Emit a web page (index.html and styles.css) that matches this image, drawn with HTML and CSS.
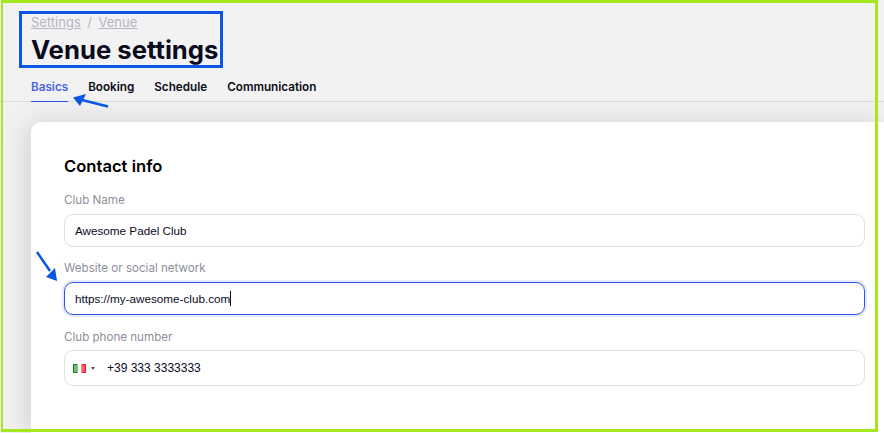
FILE: index.html
```html
<!DOCTYPE html>
<html lang="en">
<head>
    <meta charset="UTF-8">
    <meta name="viewport" content="width=device-width, initial-scale=1.0">
    <title>Venue settings</title>
    <link rel="stylesheet" href="styles.css">
</head>
<body>
    <div class="page">
        <header class="header">
            <nav class="breadcrumb">
                <a href="#">Settings</a>
                <span class="sep">/</span>
                <a href="#">Venue</a>
            </nav>
            <h1>Venue settings</h1>
        </header>

        <div class="tabs">
            <a href="#" class="tab active">Basics</a>
            <a href="#" class="tab">Booking</a>
            <a href="#" class="tab">Schedule</a>
            <a href="#" class="tab">Communication</a>
        </div>

        <main class="card">
            <h2>Contact info</h2>

            <label class="label">Club Name</label>
            <div class="field">Awesome Padel Club</div>

            <label class="label">Website or social network</label>
            <div class="field focused">https://my-awesome-club.com<span class="caret"></span></div>

            <label class="label phone-label">Club phone number</label>
            <div class="field phone">
                <svg class="flag" width="13" height="9" viewBox="0 0 13 9">
                    <rect width="13" height="9" fill="#fff"/>
                    <rect width="4.5" height="9" fill="#1f7a2c"/>
                    <rect x="1" y="1" width="3.5" height="7" fill="#6cc06f"/>
                    <rect x="8.5" width="4.5" height="9" fill="#f0222c"/>
                    <rect x="8.5" y="1" width="3" height="7" fill="#f76a6a"/>
                </svg>
                <span class="arrow"></span>
                <span class="phone-number">+39 333 3333333</span>
            </div>
        </main>
    </div>

    <!-- annotations drawn on top of the screenshot -->
    <div class="frame"></div>
    <div class="highlight"></div>
    <svg class="marks" width="884" height="433" viewBox="0 0 884 433">
        <line x1="108" y1="106.5" x2="82" y2="100" stroke="#0b57e3" stroke-width="2.5"/>
        <polygon points="73,97.5 86,94 80,106" fill="#0b57e3"/>
        <line x1="37" y1="252" x2="50" y2="271" stroke="#0b57e3" stroke-width="2.5"/>
        <polygon points="57,281 46,277 55,268" fill="#0b57e3"/>
    </svg>
</body>
</html>
```

FILE: styles.css
```css
body {
    margin: 0;
    height: 433px;
    overflow: hidden;
    background: #f2f2f3;
    font-family: 'Inter', sans-serif;
    color: #0b0b1e;
}
a {
    color: inherit;
}
.page {
    display: flex;
    flex-direction: column;
    height: 433px;
}
.header {
    padding: 14px 0 0 31px;
}
.breadcrumb {
    display: flex;
    gap: 6.5px;
    font-size: 13px;
    line-height: 16px;
    color: #b6b6c2;
}
.sep {
    text-decoration: none;
}
h1 {
    margin: 4px 0 0;
    font-size: 25.7px;
    line-height: 32px;
    font-weight: 700;
}
.tabs {
    display: flex;
    gap: 20px;
    margin-top: 10px;
    padding-left: 31px;
    border-bottom: 1px solid #dcdcde;
}
.tab {
    padding: 4px 0 6px;
    font-size: 11.7px;
    line-height: 15px;
    font-weight: 600;
    text-decoration: none;
    color: #0b0b14;
}
.tab.active {
    color: #4a64e8;
    border-bottom: 1px solid #2f4fe0;
    margin-bottom: -1px;
}
.card {
    flex: 1;
    margin: 20px 0 0 31px;
    padding: 34px 19px 0 33px;
    background: #fff;
    border-radius: 10px 0 0 0;
    box-shadow: -3px 2px 30px rgba(0, 0, 0, 0.15);
}
h2 {
    margin: 0 0 16px;
    font-size: 16.6px;
    line-height: 20px;
    font-weight: 600;
    color: #000;
}
.label {
    display: block;
    padding-top: 1px;
    margin-bottom: 6px;
    font-size: 11.6px;
    line-height: 15px;
    color: #8f8f9c;
}
.phone-label {
    padding-top: 2px;
    margin-bottom: 5px;
}
.field {
    display: flex;
    align-items: center;
    box-sizing: border-box;
    height: 33px;
    margin-bottom: 13px;
    padding: 0 10px;
    border: 1px solid #e0e0e4;
    border-radius: 9px;
    font-family: 'Liberation Sans', Arial, sans-serif;
    font-size: 11.7px;
    color: #0b0b1e;
}
.focused {
    border-color: #2f55e8;
    box-shadow: 0 0 0 2px #e4e9fc;
}
.caret {
    width: 1px;
    height: 15px;
    background: #0b0b1e;
}
.phone {
    height: 36px;
    padding-left: 8px;
}
.phone-number {
    font-size: 12px;
}
.flag {
    display: block;
}
.arrow {
    width: 0;
    height: 0;
    margin: 0 12px 0 5px;
    border-left: 2px solid transparent;
    border-right: 2px solid transparent;
    border-top: 3px solid #555;
}
.frame {
    position: absolute;
    left: 1px;
    top: 0;
    width: 872px;
    height: 426px;
    border: 3px solid #a6e81f;
    border-left-width: 2px;
}
.highlight {
    position: absolute;
    left: 19px;
    top: 11px;
    width: 198px;
    height: 51px;
    border: 3px solid #0b57e3;
}
.marks {
    position: absolute;
    left: 0;
    top: 0;
}
```
